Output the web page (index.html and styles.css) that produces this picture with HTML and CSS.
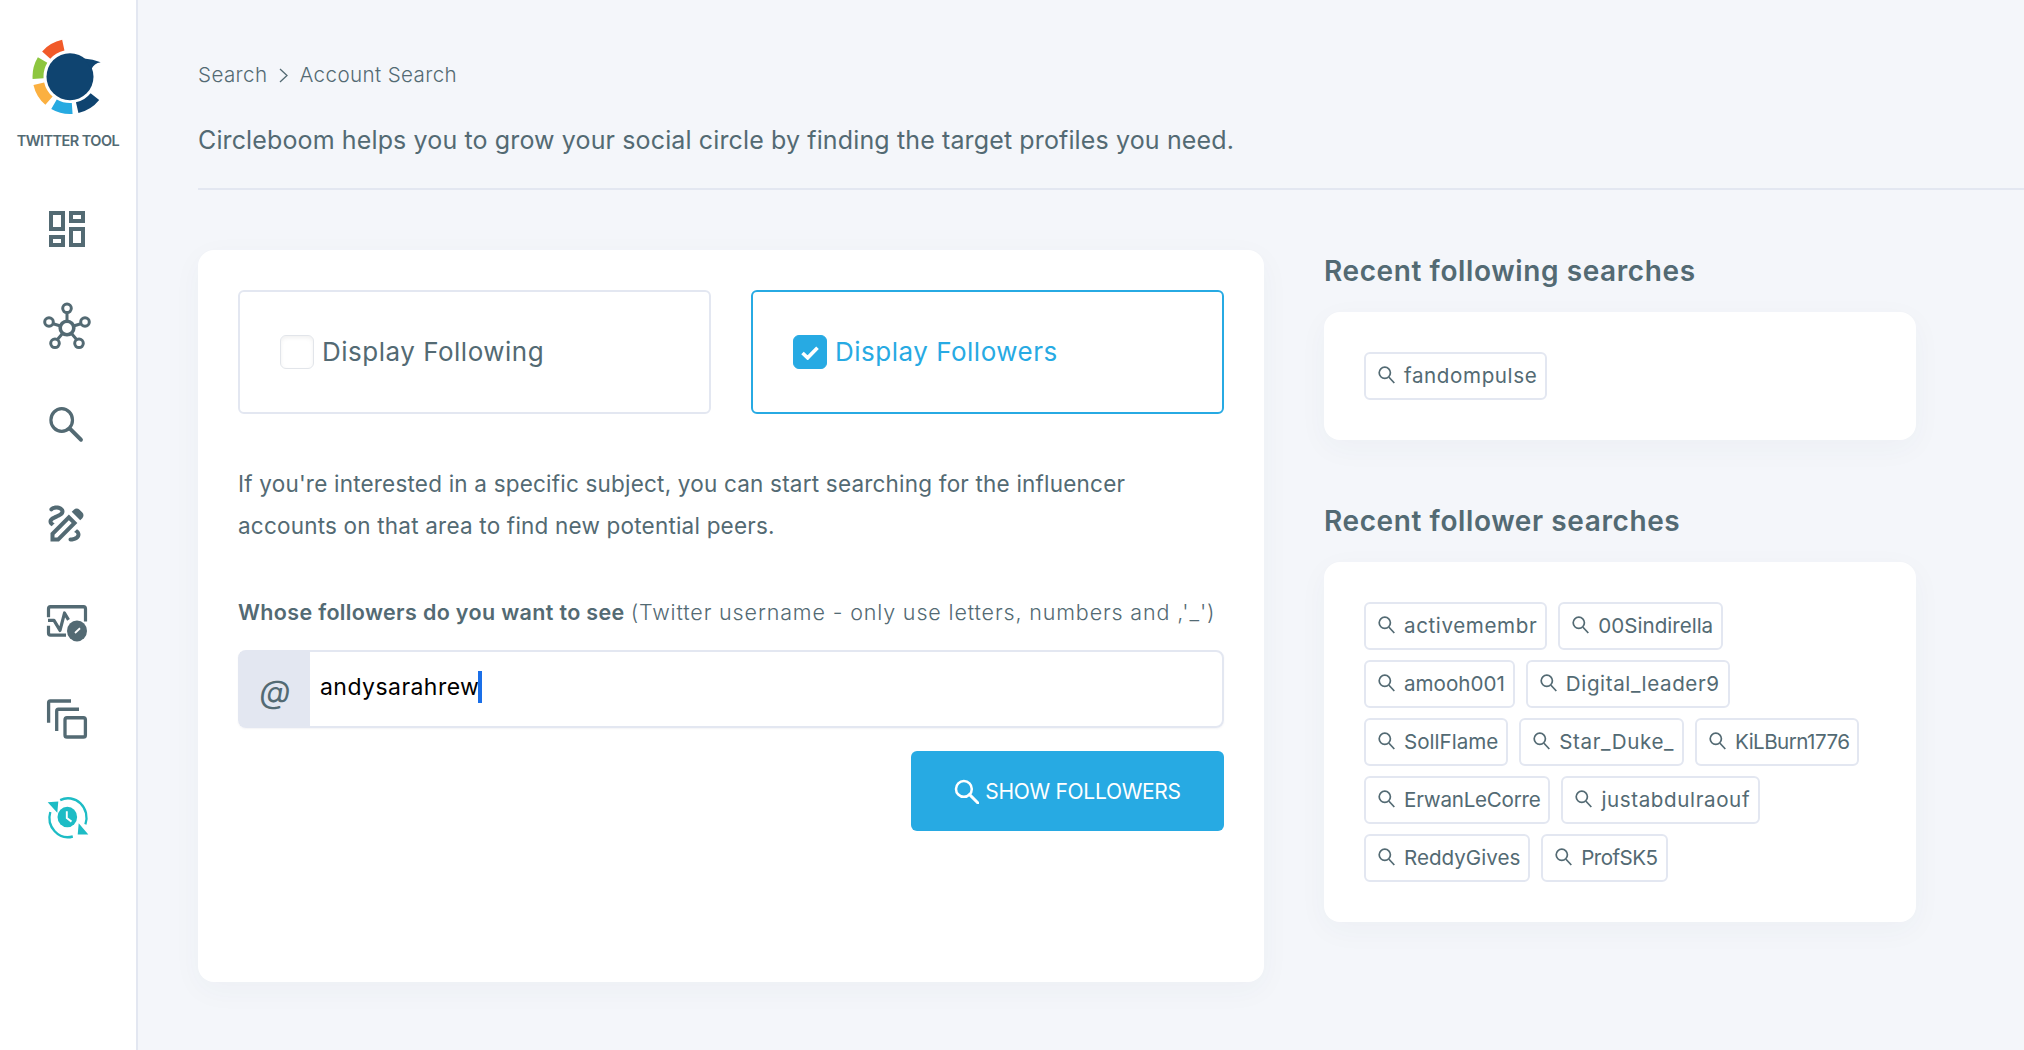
FILE: index.html
```html
<!DOCTYPE html>
<html lang="en">
<head>
<meta charset="utf-8">
<title>Account Search</title>
<link rel="stylesheet" href="styles.css">
</head>
<body>
<aside class="sidebar">
  <div class="brand">
    <svg class="logo" viewBox="32 38 72 78" width="72" height="78">
      <g fill="none" stroke-width="11">
        <path stroke="#f15a29" d="M46.2 55.1A32 32 0 0 1 63.3 45.2"/>
        <path stroke="#8dc63f" d="M42.6 60A32 32 0 0 0 38.1 78.7"/>
        <path stroke="#fbb040" d="M38.8 83.7A32 32 0 0 0 49 100.7"/>
        <path stroke="#27aae1" d="M54 104.2A32 32 0 0 0 72.2 108.4"/>
        <path stroke="#0f4470" d="M77.2 107.7A32 32 0 0 0 94.9 96.6"/>
      </g>
      <circle cx="70" cy="76.7" r="23.5" fill="#0f4470"/>
      <path fill="#0f4470" d="M84 58.5Q93 59 100.7 62.3Q94 63.5 91.5 69Z"/>
    </svg>
    <div class="brand-name">TWITTER TOOL</div>
  </div>
  <nav class="nav">
    <a class="nav-item"><svg class="nav-icon" viewBox="0.5 0 24 24"><path class="solid" d="M19 5v2h-4V5h4M9 5v6H5V5h4m10 8v6h-4v-6h4M9 17v2H5v-2h4M21 3h-8v6h8V3zM11 3H3v10h8V3zm10 8h-8v10h8V11zm-10 4H3v6h8v-6z"/></svg></a>
    <a class="nav-item"><svg class="nav-icon" viewBox="44 303 48 48">
      <g class="line" stroke-width="3">
        <path d="M67 312.6V321M53.1 323.7L60.5 326M80.9 323.7L73.5 326M57.4 339.5L62.5 333.5M76.6 339.5L71.5 333.5"/>
        <circle cx="67" cy="308.3" r="4.3"/><circle cx="49" cy="322" r="4.3"/><circle cx="85" cy="322" r="4.3"/><circle cx="55" cy="343.3" r="4.3"/><circle cx="79" cy="343.3" r="4.3"/>
        <circle cx="67" cy="328" r="6.8" stroke-width="3.6"/>
      </g></svg></a>
    <a class="nav-item"><svg class="nav-icon" viewBox="44 398.6 48 45.7" preserveAspectRatio="none">
      <g class="line" stroke-width="3.2"><circle cx="61.7" cy="416.7" r="10.8"/><path d="M70 425L81 435.5" stroke-width="3.8" stroke-linecap="round"/></g></svg></a>
    <a class="nav-item"><svg class="nav-icon" viewBox="0.75 -0.25 24 24">
      <path class="solid" fill-rule="evenodd" d="M18.85 10.39l1.06-1.06c.78-.78.78-2.05 0-2.83L18.5 5.09c-.78-.78-2.05-.78-2.83 0l-1.06 1.06 4.24 4.24zM13.19 7.56L4 16.76V21h4.24l9.19-9.19-4.24-4.25zM13.19 10.39l1.41 1.42-7.19 7.19H6v-1.41zM19 17.5c0 2.19-2.54 3.5-5 3.5-.55 0-1-.45-1-1s.45-1 1-1c1.54 0 3-.73 3-1.5 0-.47-.48-.87-1.23-1.2l1.48-1.48c1.07.63 1.75 1.47 1.75 2.68zM4.58 13.35C3.61 12.79 3 12.06 3 11c0-1.8 1.89-2.63 3.56-3.36C7.59 7.18 9 6.56 9 6c0-.41-.78-1-2-1-1.26 0-1.8.61-1.83.64-.35.41-.98.46-1.4.12-.41-.34-.49-.95-.15-1.38C3.73 4.24 4.76 3 7 3s4 1.32 4 3c0 1.87-1.93 2.72-3.64 3.47C6.42 9.88 5 10.5 5 11c0 .31.43.6 1.07.86l-1.49 1.49z"/></svg></a>
    <a class="nav-item"><svg class="nav-icon" viewBox="44 584.7 48 45.7" preserveAspectRatio="none">
      <g class="line" stroke-width="3.2">
        <path d="M48.5 604V596a2 2 0 0 1 2-2H83.5a2 2 0 0 1 2 2V608"/>
        <path d="M48.5 612V619a2 2 0 0 0 2 2H66"/>
        <path d="M48 607H54L60 616.5L64.5 600L68.5 606.5" stroke-linejoin="round"/>
      </g>
      <circle class="solid" cx="77" cy="617" r="10"/>
      <path d="M75 619L80 614.5" stroke="#fff" stroke-width="1.8" fill="none"/></svg></a>
    <a class="nav-item"><svg class="nav-icon" viewBox="44 677.64 48 45.7" preserveAspectRatio="none">
      <g class="line" stroke-width="3.3">
        <rect x="65" y="699.3" width="20.4" height="18.4" rx="2"/>
        <path d="M48.6 704V685a1.7 1.7 0 0 1 1.7-1.7H71"/>
        <path d="M56.7 712V693a1.7 1.7 0 0 1 1.7-1.7H79"/>
      </g></svg></a>
    <a class="nav-item"><svg class="nav-icon" viewBox="44 771.2 48 45.7" preserveAspectRatio="none">
      <g fill="none" stroke="#1dbcc5" stroke-width="2.3">
        <path d="M50.3 789.3A18.5 18.5 0 0 0 72.8 812.6"/>
        <path d="M60.2 777.9A18.5 18.5 0 0 1 85.4 801"/>
      </g>
      <path fill="#1dbcc5" d="M47.7 780L58.3 779.3L57.3 790ZM88.3 810.7L77.7 810.7L78.7 800Z"/>
      <circle cx="67.3" cy="794" r="9.8" fill="#1dbcc5"/>
      <path d="M66.8 788.5V795L71.5 798.5" fill="none" stroke="#fff" stroke-width="1.9"/></svg></a>
  </nav>
</aside>
<main class="main">
  <header class="page-head">
    <div class="crumbs"><span>Search</span>
      <svg class="crumb-sep" viewBox="0 0 9 15" width="9" height="15"><path d="M1 1L8 7.5L1 14" fill="none" stroke="#536a73" stroke-width="1.3"/></svg>
      <span>Account Search</span></div>
    <p class="intro">Circleboom helps you to grow your social circle by finding the target profiles you need.</p>
  </header>
  <div class="columns">
    <section class="card search-card">
      <div class="options">
        <label class="option"><span class="box"></span><span class="option-text">Display Following</span></label>
        <label class="option active"><span class="box checked"><svg viewBox="0 0 18 14" width="20" height="15"><path d="M2 7.5L6.8 12L16 2.5" fill="none" stroke="#fff" stroke-width="3.4"/></svg></span><span class="option-text">Display Followers</span></label>
      </div>
      <p class="desc">If you're interested in a specific subject, you can start searching for the influencer<br>accounts on that area to find new potential peers.</p>
      <p class="field-label"><b>Whose followers do you want to see</b> <span class="hint">(Twitter username - only use letters, numbers and ,'_')</span></p>
      <div class="input-group">
        <span class="at">@</span>
        <div class="input"><span class="value">andysarahrew</span><span class="caret"></span></div>
      </div>
      <div class="actions">
        <button class="btn"><svg viewBox="0 0 24 24" width="25" height="25"><circle cx="9.5" cy="9.5" r="7.6" fill="none" stroke="#fff" stroke-width="2.4"/><path d="M15 15L23 23" stroke="#fff" stroke-width="2.8" stroke-linecap="round"/></svg>SHOW FOLLOWERS</button>
      </div>
    </section>
    <aside class="recent">
      <h2 class="recent-title">Recent following searches</h2>
      <div class="card chips">
        <a class="chip wide"><svg class="chip-icon" viewBox="0 0 17 18"><circle cx="6.8" cy="6.8" r="5.6" /><path d="M11 11.2L16.3 17"/></svg>fandompulse</a>
      </div>
      <h2 class="recent-title second">Recent follower searches</h2>
      <div class="card chips">
        <a class="chip wide"><svg class="chip-icon" viewBox="0 0 17 18"><circle cx="6.8" cy="6.8" r="5.6" /><path d="M11 11.2L16.3 17"/></svg>activemembr</a>
        <a class="chip"><svg class="chip-icon" viewBox="0 0 17 18"><circle cx="6.8" cy="6.8" r="5.6" /><path d="M11 11.2L16.3 17"/></svg>00Sindirella</a>
        <a class="chip"><svg class="chip-icon" viewBox="0 0 17 18"><circle cx="6.8" cy="6.8" r="5.6" /><path d="M11 11.2L16.3 17"/></svg>amooh001</a>
        <a class="chip wide"><svg class="chip-icon" viewBox="0 0 17 18"><circle cx="6.8" cy="6.8" r="5.6" /><path d="M11 11.2L16.3 17"/></svg>Digital_leader9</a>
        <a class="chip"><svg class="chip-icon" viewBox="0 0 17 18"><circle cx="6.8" cy="6.8" r="5.6" /><path d="M11 11.2L16.3 17"/></svg>SollFlame</a>
        <a class="chip wide"><svg class="chip-icon" viewBox="0 0 17 18"><circle cx="6.8" cy="6.8" r="5.6" /><path d="M11 11.2L16.3 17"/></svg>Star_Duke_</a>
        <a class="chip tight"><svg class="chip-icon" viewBox="0 0 17 18"><circle cx="6.8" cy="6.8" r="5.6" /><path d="M11 11.2L16.3 17"/></svg>KiLBurn1776</a>
        <a class="chip narrow"><svg class="chip-icon" viewBox="0 0 17 18"><circle cx="6.8" cy="6.8" r="5.6" /><path d="M11 11.2L16.3 17"/></svg>ErwanLeCorre</a>
        <a class="chip wide"><svg class="chip-icon" viewBox="0 0 17 18"><circle cx="6.8" cy="6.8" r="5.6" /><path d="M11 11.2L16.3 17"/></svg>justabdulraouf</a>
        <a class="chip"><svg class="chip-icon" viewBox="0 0 17 18"><circle cx="6.8" cy="6.8" r="5.6" /><path d="M11 11.2L16.3 17"/></svg>ReddyGives</a>
        <a class="chip tight"><svg class="chip-icon" viewBox="0 0 17 18"><circle cx="6.8" cy="6.8" r="5.6" /><path d="M11 11.2L16.3 17"/></svg>ProfSK5</a>
      </div>
    </aside>
  </div>
</main>
</body>
</html>
```
FILE: styles.css
```css
* { box-sizing: border-box; }
html, body { height: 100%; }
body {
  margin: 0;
  display: flex;
  min-height: 1050px;
  overflow: hidden;
  background: #f4f6fa;
  color: #536a73;
  font-family: Inter, "Open Sans", sans-serif;
}
.sidebar {
  flex: 0 0 138px;
  background: #fff;
  border-right: 2px solid #e3e7f1;
}
.brand {
  height: 180px;
  padding-top: 38px;
  display: flex;
  flex-direction: column;
}
.logo { display: block; margin-left: 32px; }
.brand-name {
  margin-top: 16px;
  text-align: center;
  font-size: 14.5px;
  font-weight: 600;
  line-height: 18px;
  letter-spacing: -0.55px;
  white-space: nowrap;
}
.nav { display: flex; flex-direction: column; }
.nav-item {
  height: 98px;
  display: flex;
  align-items: center;
  justify-content: center;
}
.nav-icon { width: 48px; height: 48px; overflow: visible; display: block; }
.solid { fill: #536a73; }
.line { fill: none; stroke: #536a73; }

.main { flex: 1; min-width: 0; padding-left: 60px; }
.page-head { height: 190px; padding-top: 62px; border-bottom: 2px solid #e3e7f1; }
.crumbs {
  display: flex;
  align-items: center;
  font-size: 20.6px;
  line-height: 26px;
  font-weight: 300;
  letter-spacing: 0.38px;
}
.crumb-sep { margin: 0 11px 0 12px; }
.intro {
  margin: 36px 0 0;
  font-size: 25px;
  line-height: 32px;
  letter-spacing: 0.13px;
}
.columns {
  display: grid;
  grid-template-columns: 1066px 592px;
  gap: 60px;
  align-items: start;
  margin-top: 60px;
}
.card {
  background: #fff;
  border-radius: 16px;
  box-shadow: 0 8px 30px rgba(60, 70, 110, 0.04);
}
.search-card { height: 732px; padding: 40px; }
.options { display: grid; grid-template-columns: 473px 473px; gap: 40px; }
.option {
  height: 124px;
  padding-left: 40px;
  display: flex;
  align-items: center;
  border: 2px solid #e3e7f1;
  border-radius: 6px;
  font-size: 26px;
  letter-spacing: 0.5px;
}
.option-text { padding-bottom: 2px; }
.option.active { border-color: #27aae3; color: #27aae3; }
.box {
  width: 34px;
  height: 34px;
  margin-right: 8px;
  border: 1px solid #e2e5ea;
  border-radius: 6px;
  box-shadow: inset 0 2px 4px rgba(0, 0, 0, 0.06);
  display: flex;
  align-items: center;
  justify-content: center;
}
.box.checked { background: #27aae3; border-color: #27aae3; box-shadow: none; }
.desc { margin: 49px 0 0; font-size: 22.5px; line-height: 42px; letter-spacing: 0.2px; }
.field-label { margin: 44px 0 0; font-size: 21.5px; line-height: 42px; white-space: nowrap; }
.field-label b { font-weight: 600; letter-spacing: 0.35px; }
.hint { font-weight: 300; letter-spacing: 0.85px; }
.input-group {
  margin-top: 17px;
  height: 78px;
  display: flex;
  border: 2px solid #e3e7f1;
  border-radius: 8px;
  box-shadow: 0 1px 2px rgba(60, 70, 110, 0.06);
}
.at {
  flex: 0 0 70px;
  background: #e3e7f1;
  display: flex;
  align-items: center;
  justify-content: center;
  font-size: 32px;
  font-style: italic;
  font-weight: 400;
  padding-top: 4px;
}
.input {
  flex: 1;
  display: flex;
  align-items: center;
  padding-left: 10px;
  font-size: 23px;
  letter-spacing: 0.45px;
  color: #000;
  margin-top: -4px;
}
.caret { width: 4px; height: 32px; background: #1a6fe8; margin-left: -1px; }
.actions { display: flex; justify-content: flex-end; margin-top: 23px; }
.btn {
  width: 313px;
  height: 80px;
  border: 0;
  border-radius: 6px;
  background: #27aae3;
  color: #fff;
  font: 400 21px Inter, sans-serif;
  letter-spacing: -0.3px;
  display: flex;
  align-items: center;
  justify-content: center;
  gap: 6px;
}
.recent-title { margin: 0; font-size: 28px; line-height: 42px; font-weight: 600; letter-spacing: 0.6px; }
.chips { margin-top: 20px; padding: 40px; display: flex; flex-wrap: wrap; gap: 10px 11px; }
.second { margin-top: 60px; }
.chip {
  height: 48px;
  padding: 0 8px 2px 12px;
  display: flex;
  align-items: center;
  gap: 9px;
  border: 2px solid #e3e7f1;
  border-radius: 6px;
  font-size: 20.6px;
  letter-spacing: 0;
}
.chip.wide { letter-spacing: 0.6px; }
.chip.narrow { letter-spacing: -0.25px; }
.chip.tight { letter-spacing: -0.55px; }
.chip-icon { width: 17px; height: 18px; fill: none; stroke: #536a73; stroke-width: 1.7; flex: none; }
```
